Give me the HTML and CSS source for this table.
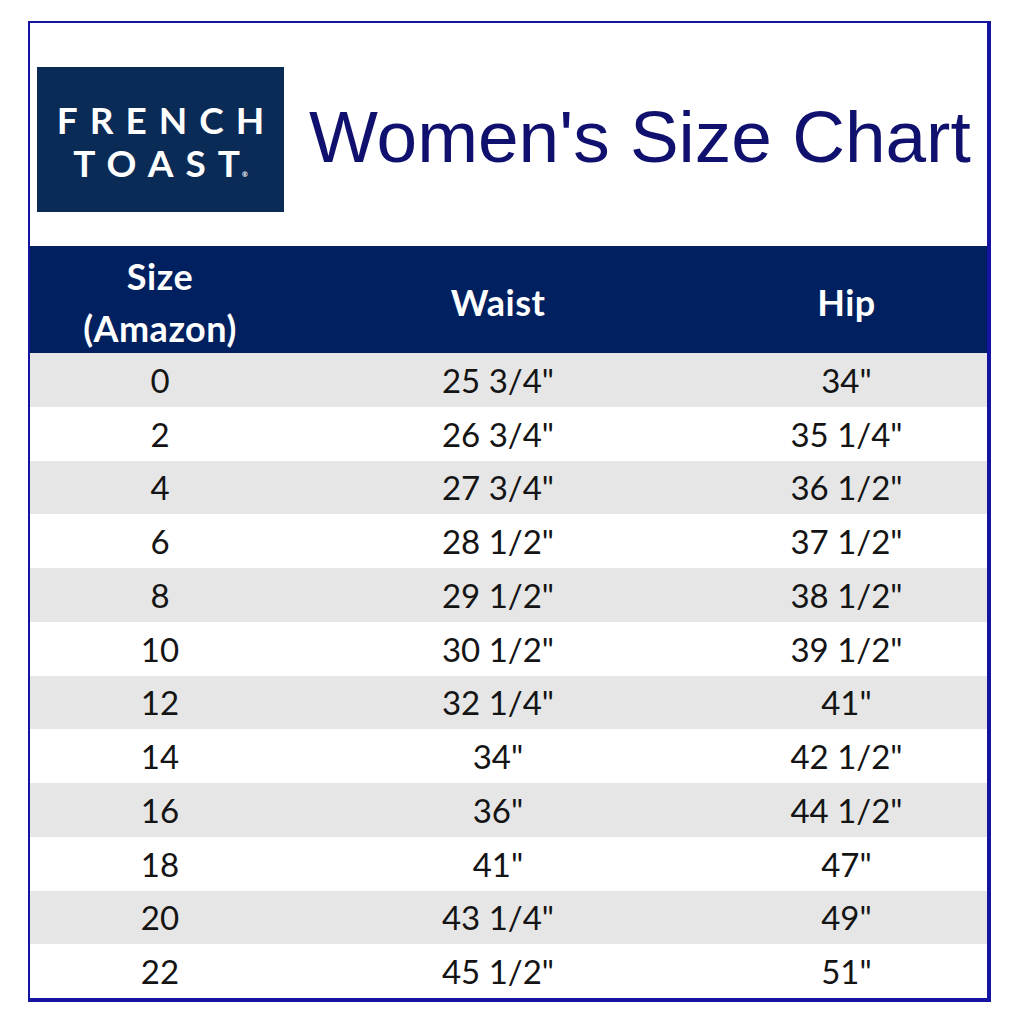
FILE: index.html
```html
<!DOCTYPE html>
<html lang="en">
<head>
<meta charset="utf-8">
<title>Women's Size Chart</title>
<link rel="stylesheet" href="styles.css">
</head>
<body>
<div class="chart">
  <header class="top">
    <div class="logo">
      <span class="logo-line first">FRENCH</span>
      <span class="logo-line">TOAS<span class="last">T</span><span class="reg">®</span></span>
    </div>
    <h1 class="title">Women's Size Chart</h1>
  </header>
  <div class="grid">
    <div class="hcell"><span>Size</span><span>(Amazon)</span></div>
    <div class="hcell">Waist</div>
    <div class="hcell">Hip</div>

    <div class="cell g">0</div><div class="cell g">25 3/4"</div><div class="cell g">34"</div>
    <div class="cell">2</div><div class="cell">26 3/4"</div><div class="cell">35 1/4"</div>
    <div class="cell g">4</div><div class="cell g">27 3/4"</div><div class="cell g">36 1/2"</div>
    <div class="cell">6</div><div class="cell">28 1/2"</div><div class="cell">37 1/2"</div>
    <div class="cell g">8</div><div class="cell g">29 1/2"</div><div class="cell g">38 1/2"</div>
    <div class="cell">10</div><div class="cell">30 1/2"</div><div class="cell">39 1/2"</div>
    <div class="cell g">12</div><div class="cell g">32 1/4"</div><div class="cell g">41"</div>
    <div class="cell">14</div><div class="cell">34"</div><div class="cell">42 1/2"</div>
    <div class="cell g">16</div><div class="cell g">36"</div><div class="cell g">44 1/2"</div>
    <div class="cell">18</div><div class="cell">41"</div><div class="cell">47"</div>
    <div class="cell g">20</div><div class="cell g">43 1/4"</div><div class="cell g">49"</div>
    <div class="cell">22</div><div class="cell">45 1/2"</div><div class="cell">51"</div>
  </div>
</div>
</body>
</html>
```
FILE: styles.css
```css
html, body {
  margin: 0;
  padding: 0;
  background: #ffffff;
}

.chart {
  margin: 21px 0 0 28px;
  width: 957px;
  border-style: solid;
  border-color: #1414a0;
  border-width: 2px 4px 4px 2px;
  background: #ffffff;
}

.top {
  display: flex;
  align-items: flex-start;
  height: 223px;
  padding: 44px 0 0 7px;
  box-sizing: border-box;
}

.logo {
  width: 247px;
  height: 145px;
  padding-top: 14px;
  box-sizing: border-box;
  background: #0b2b57;
  display: flex;
  flex-direction: column;
  align-items: center;
  justify-content: center;
  font-family: Lato, "Liberation Sans", sans-serif;
  font-weight: 700;
  font-size: 37px;
  line-height: 43px;
  color: #ffffff;
}

.logo-line {
  letter-spacing: 12px;
}

.logo-line.first {
  margin-right: -12px;
}

.last {
  letter-spacing: 0;
}

.reg {
  font-size: 7px;
  letter-spacing: 0;
  margin-left: 2px;
}

.title {
  margin: 33px 0 0 25px;
  font-family: "Liberation Sans", Arial, sans-serif;
  font-weight: 400;
  font-size: 73px;
  line-height: 73px;
  color: #10106f;
  white-space: nowrap;
}

.grid {
  display: grid;
  grid-template-columns: 260px 416px 281px;
  grid-template-rows: 107px repeat(12, 53.75px);
  font-family: Lato, "Liberation Sans", sans-serif;
}

.hcell {
  background: #00205f;
  color: #ffffff;
  font-weight: 700;
  font-size: 36px;
  letter-spacing: 0.5px;
  line-height: 52px;
  display: flex;
  flex-direction: column;
  align-items: center;
  justify-content: center;
  padding-top: 4px;
  box-sizing: border-box;
}

.cell {
  display: flex;
  align-items: center;
  justify-content: center;
  font-size: 33px;
  color: #141414;
  background: #ffffff;
}

.cell.g {
  background: #e6e6e6;
}
```
